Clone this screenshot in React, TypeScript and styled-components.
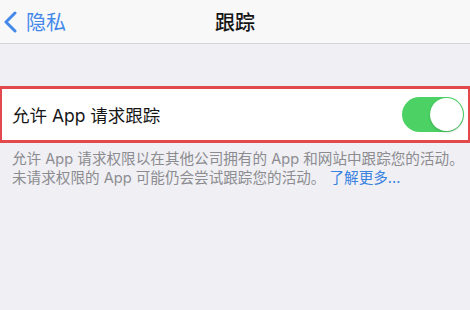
import React from 'react';
import styled, { createGlobalStyle } from 'styled-components';

const GlobalStyle = createGlobalStyle`
  html, body {
    margin: 0;
    padding: 0;
    background: #efeff4;
    font-family: "Inter", "Noto Sans CJK SC", sans-serif;
  }
`;

const Page = styled.div`
  width: 470px;
  height: 310px;
  background: #efeff4;
  overflow: hidden;
`;

const NavBar = styled.header`
  height: 44px;
  background: #f8f8f9;
  border-bottom: 1px solid #d4d4d8;
  box-sizing: border-box;
  display: grid;
  grid-template-columns: 1fr auto 1fr;
  align-items: center;
`;

const BackButton = styled.div`
  display: flex;
  align-items: center;
  gap: 9px;
  padding-left: 3px;
  color: #4489ea;
  font-size: 20px;
`;

const Title = styled.div`
  font-size: 20px;
  font-weight: 500;
  color: #151515;
`;

const Spacer = styled.div`
  height: 42px;
`;

const Cell = styled.div`
  height: 57px;
  box-sizing: border-box;
  background: #fff;
  border: 3px solid #e2494d;
  border-left-width: 2px;
  border-right-width: 2px;
  display: flex;
  align-items: center;
  justify-content: space-between;
  padding: 0 4px 0 10px;
`;

const Label = styled.span`
  font-size: 17.5px;
  color: #161616;
`;

const Toggle = styled.div<{ $on: boolean }>`
  width: 62px;
  height: 35px;
  border-radius: 18px;
  background: ${(p) => (p.$on ? '#4cd264' : '#e5e5ea')};
  display: flex;
  align-items: center;
  justify-content: ${(p) => (p.$on ? 'flex-end' : 'flex-start')};
  padding: 0 1px;
  box-sizing: border-box;
`;

const Knob = styled.div`
  width: 33px;
  height: 33px;
  border-radius: 50%;
  background: #fff;
  box-shadow: 0 1px 3px rgba(0, 0, 0, 0.2);
`;

const Footer = styled.p`
  margin: 0;
  padding: 7px 10px 0 12px;
  font-size: 14.6px;
  line-height: 19px;
  color: #8c8c90;
  white-space: nowrap;
`;

const Link = styled.span`
  color: #3a82e0;
  margin-left: 4px;
`;

export default function App() {
  return (
    <>
      <GlobalStyle />
      <Page>
        <NavBar>
          <BackButton>
            <svg width="14" height="22" viewBox="0 0 14 22">
              <polyline
                points="12,2 3,11 12,20"
                fill="none"
                stroke="#4489ea"
                strokeWidth="3"
                strokeLinecap="round"
                strokeLinejoin="round"
              />
            </svg>
            隐私
          </BackButton>
          <Title>跟踪</Title>
          <div />
        </NavBar>
        <Spacer />
        <Cell>
          <Label>允许 App 请求跟踪</Label>
          <Toggle $on>
            <Knob />
          </Toggle>
        </Cell>
        <Footer>
          允许 App 请求权限以在其他公司拥有的 App 和网站中跟踪您的活动。
          <br />
          未请求权限的 App 可能仍会尝试跟踪您的活动。<Link>了解更多...</Link>
        </Footer>
      </Page>
    </>
  );
}
